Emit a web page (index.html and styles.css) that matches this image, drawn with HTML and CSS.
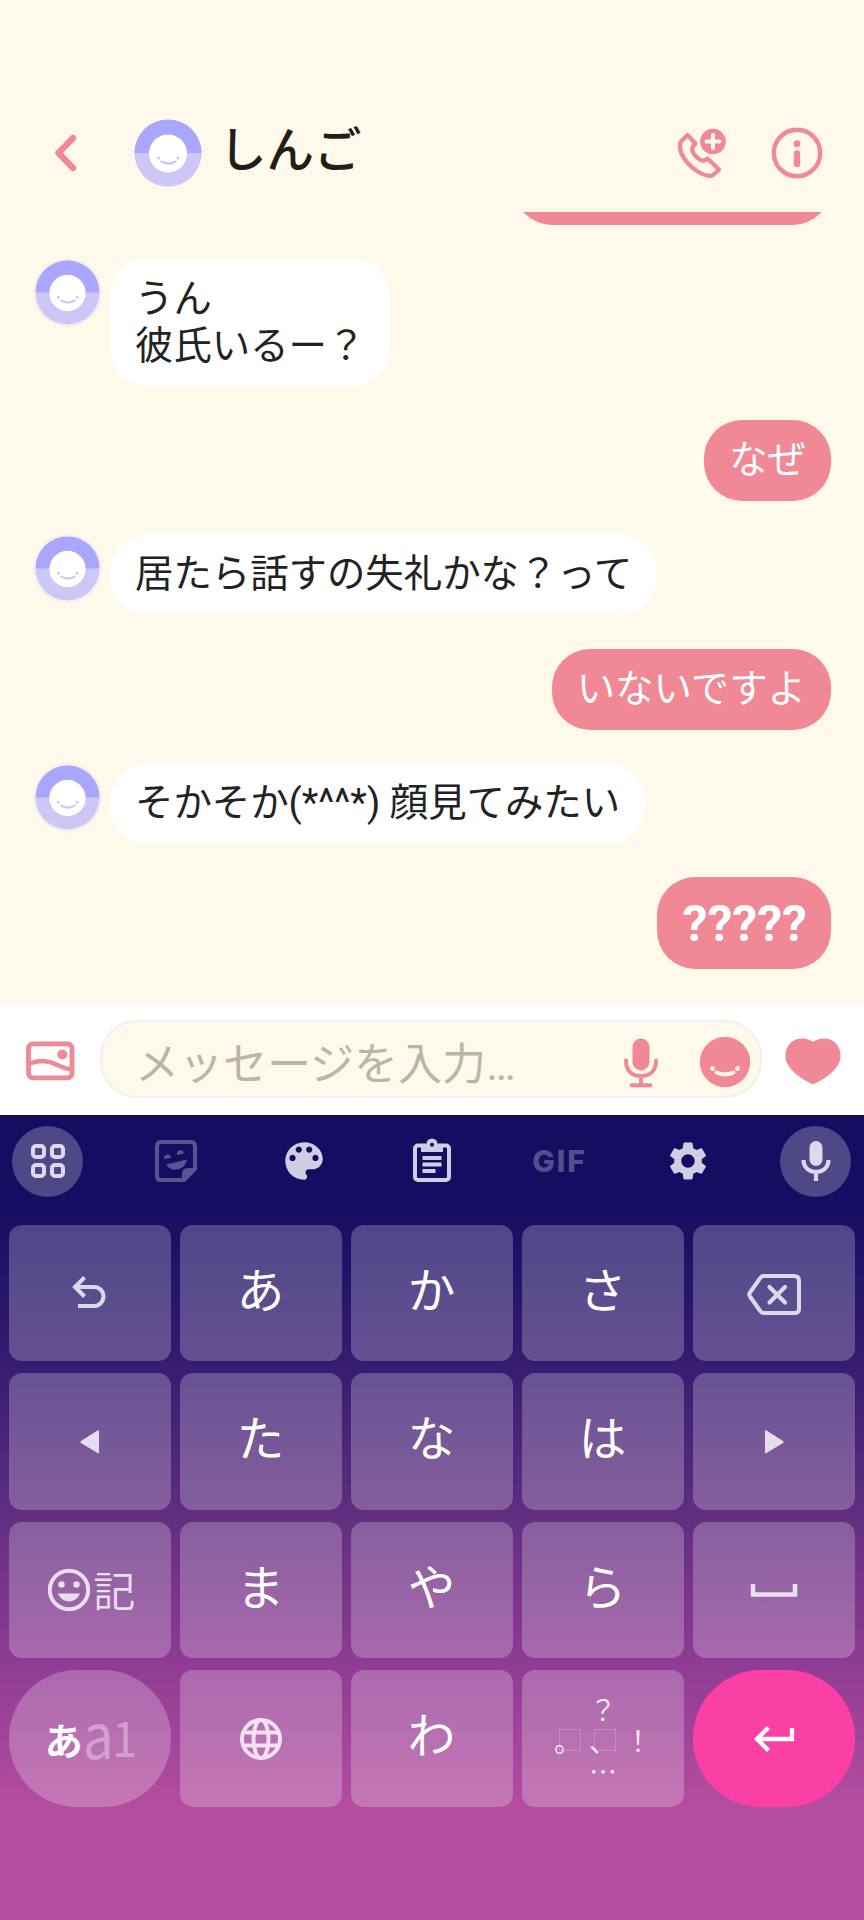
FILE: index.html
```html
<!DOCTYPE html>
<html lang="ja">
<head>
<meta charset="utf-8">
<title>しんご</title>
<link rel="stylesheet" href="styles.css">
</head>
<body>
<svg class="defs" width="0" height="0">
  <symbol id="avatar" viewBox="0 0 68 68">
    <circle cx="34" cy="34" r="33.5" fill="#cdc7f6"/>
    <path d="M.5 34a33.5 33.5 0 0 1 67 0z" fill="#a8a7fd"/>
    <circle cx="34" cy="34.5" r="19" fill="#fff"/>
    <path d="M27.500 42.500Q34.500 46.500 41.500 42.500" fill="none" stroke="#cdc7f6" stroke-width="2.400" stroke-linecap="round"/>
    <circle cx="24.500" cy="39" r="1.500" fill="#cdc7f6"/><circle cx="44" cy="39" r="1.500" fill="#cdc7f6"/>
  </symbol>
</svg>
<div class="screen">
  <header class="header">
    <svg class="back" width="24" height="40" viewBox="0 0 24 40"><path d="M20 5 5.500 20 20 35" fill="none" stroke="#f08896" stroke-width="6.400" stroke-linecap="round" stroke-linejoin="round"/></svg>
    <svg class="photo" width="68" height="68"><use href="#avatar"/></svg>
    <h1 class="name">しんご</h1>
    <svg class="call" width="52" height="52" viewBox="0 0 52 52">
      <path d="M12.500 8 20.500 16.500C15 21 17 25.500 21 29.500C25 33.500 29 35.500 32.500 31.500L44 42.500 37.500 48.500C31 50 21 45 14 37.500C7 30 3.500 22 5.500 15Z" fill="none" stroke="#f08896" stroke-width="4.200" stroke-linejoin="round"/>
      <circle cx="38" cy="14.500" r="14.500" fill="#fff9eb"/><circle cx="38" cy="14.500" r="12.800" fill="#f08896"/>
      <path d="M38 8v13M31.500 14.500h13" stroke="#fff9eb" stroke-width="4" stroke-linecap="round"/>
    </svg>
    <svg class="info" width="52" height="52" viewBox="0 0 52 52">
      <circle cx="26" cy="26" r="23.200" fill="none" stroke="#f08896" stroke-width="4.400"/>
      <circle cx="26" cy="16.700" r="3.400" fill="#f08896"/><path d="M26 26.500v10.500" stroke="#f08896" stroke-width="6.400" stroke-linecap="round"/>
    </svg>
  </header>
  <main class="chat">
    <div class="row sent"><div class="bubble clipped"></div></div>
    <div class="row"><svg class="mini" width="65" height="65"><use href="#avatar"/></svg><p class="bubble tall">うん<br>彼氏いるー？</p></div>
    <div class="row sent"><p class="bubble">なぜ</p></div>
    <div class="row"><svg class="mini" width="65" height="65"><use href="#avatar"/></svg><p class="bubble">居たら話すの失礼かな？って</p></div>
    <div class="row sent"><p class="bubble">いないですよ</p></div>
    <div class="row"><svg class="mini" width="65" height="65"><use href="#avatar"/></svg><p class="bubble">そかそか<span class="latin">(*^^*) </span>顔見てみたい</p></div>
    <div class="row sent"><p class="bubble big">?????</p></div>
  </main>
  <section class="composer">
    <svg class="gallery" width="50" height="42" viewBox="0 0 50 42">
      <rect x="3.500" y="3.800" width="43.500" height="34" rx="4.500" fill="none" stroke="#f08896" stroke-width="4.800"/>
      <path d="M3.500 24C13 20 22 20 31 24.500Q39 28.500 47 29.500" fill="none" stroke="#f08896" stroke-width="4.500"/><circle cx="37.300" cy="14.500" r="5" fill="#f08896"/>
    </svg>
    <div class="field">
      <span class="placeholder">メッセージを入力<span class="dots">…</span></span>
      <svg class="mic" width="36" height="50" viewBox="0 0 36 50">
        <rect x="9.500" y=".500" width="17" height="32" rx="8.500" fill="#f08896"/>
        <path d="M3 22.500C3 34 10 38 18 38S33 34 33 22.500M18 38v9M8.500 47.200h19" fill="none" stroke="#f08896" stroke-width="4" stroke-linecap="round"/>
      </svg>
      <svg class="smile" width="52" height="52" viewBox="0 0 52 52">
        <circle cx="26" cy="26" r="25.200" fill="#f08896"/><circle cx="13.500" cy="32.500" r="2.400" fill="#fff9eb"/><circle cx="38.500" cy="32.500" r="2.400" fill="#fff9eb"/>
        <path d="M17.500 36.500Q26 40.500 34.500 36.500" fill="none" stroke="#fff9eb" stroke-width="4" stroke-linecap="round"/>
      </svg>
    </div>
    <svg class="heart" width="56" height="46" viewBox="0 0 56 46"><path d="M28 4C33 0 42-1 48 3C55 7.500 57.500 17 54 25C50 34 39 41 30 45.500Q28 46.300 26 45.500C17 41 6 34 2 25C-1.500 17 1 7.500 8 3C14-1 23 0 28 4Z" fill="#f08896"/></svg>
  </section>
  <section class="keyboard">
    <div class="tools">
      <div class="tool round"><svg width="36" height="36" viewBox="0 0 36 36" fill="none" stroke="#dcd9ec" stroke-width="4"><rect x="3" y="3" width="11" height="11" rx="3"/><rect x="22" y="3" width="11" height="11" rx="3"/><rect x="3" y="22" width="11" height="11" rx="3"/><rect x="22" y="22" width="11" height="11" rx="3"/></svg></div>
      <div class="tool"><svg width="44" height="44" viewBox="0 0 44 44"><path d="M7 3h30q4 0 4 4v23L30 41H7q-4 0-4-4V7q0-4 4-4Z" fill="none" stroke="#585391" stroke-width="4"/><path d="M28 42V35q0-6 6-6h8ZM10 20a3.500 4 0 0 1 7-1ZM23 16a3.500 4 0 0 1 7-1.500ZM12 25.500 33 20.500C31 32 17 34 12 25.500Z" fill="#585391"/></svg></div>
      <div class="tool"><svg width="50" height="50" viewBox="0 0 24 24" fill="#d0cee4"><path d="M12 3c-4.970 0-9 4.030-9 9s4.030 9 9 9c.830 0 1.500-.670 1.500-1.500 0-.390-.150-.740-.390-1.010-.230-.260-.380-.610-.380-.990 0-.830.670-1.500 1.500-1.500H16c2.760 0 5-2.240 5-5 0-4.420-4.030-8-9-8zm-5.500 9c-.830 0-1.500-.670-1.500-1.500S5.670 9 6.500 9 8 9.670 8 10.500 7.330 12 6.500 12zm3-4C8.670 8 8 7.330 8 6.500S8.670 5 9.500 5s1.500.670 1.500 1.500S10.330 8 9.500 8zm5 0c-.830 0-1.500-.670-1.500-1.500S13.670 5 14.500 5s1.500.670 1.500 1.500S15.330 8 14.500 8zm3 4c-.830 0-1.500-.670-1.500-1.500S16.670 9 17.500 9s1.500.670 1.500 1.500-.670 1.500-1.500 1.500z"/></svg></div>
      <div class="tool"><svg width="40" height="46" viewBox="0 0 40 46"><rect x="3" y="7.500" width="34" height="34.500" rx="3" fill="none" stroke="#d0cee4" stroke-width="4"/><path d="M9 6h5.500a5.500 5.500 0 0 1 11 0H31v8H9Z" fill="#d0cee4"/><circle cx="20" cy="6.800" r="2" fill="#150d62"/><path d="M10.500 20h19M10.500 26.500h19M10.500 33h13" stroke="#d0cee4" stroke-width="4"/></svg></div>
      <div class="tool"><span class="gif">GIF</span></div>
      <div class="tool"><svg width="46" height="46" viewBox="0 0 24 24" fill="#d0cee4"><path d="M19.140 12.940c.040-.300.060-.610.060-.940 0-.320-.020-.640-.070-.940l2.030-1.580c.180-.140.230-.410.120-.610l-1.920-3.320c-.120-.220-.370-.290-.590-.220l-2.390.960c-.500-.380-1.030-.700-1.620-.940l-.360-2.540c-.040-.240-.240-.410-.480-.410h-3.840c-.240 0-.430.170-.470.410l-.360 2.540c-.590.240-1.130.570-1.620.940l-2.390-.960c-.220-.080-.470 0-.590.220L2.740 8.870c-.120.210-.080.470.120.610l2.030 1.580c-.050.300-.090.630-.090.940s.020.640.070.940l-2.030 1.580c-.180.140-.230.410-.120.610l1.920 3.320c.120.220.370.290.590.220l2.390-.960c.500.380 1.030.700 1.620.940l.360 2.540c.050.240.240.410.480.410h3.840c.240 0 .440-.170.470-.410l.360-2.540c.590-.240 1.130-.560 1.620-.940l2.390.960c.220.080.470 0 .590-.220l1.920-3.320c.120-.220.070-.470-.120-.610l-2.010-1.580zM12 15.500c-1.930 0-3.500-1.570-3.500-3.500s1.570-3.500 3.500-3.500 3.500 1.570 3.500 3.500-1.570 3.500-3.500 3.500z"/></svg></div>
      <div class="tool round"><svg width="32" height="42" viewBox="0 0 32 42"><rect x="9.500" y="1" width="13" height="25" rx="6.500" fill="#dcd9ec"/><path d="M3.500 20C3.500 36 28.500 36 28.500 20M16 32v9" fill="none" stroke="#dcd9ec" stroke-width="4.200"/></svg></div>
    </div>
    <div class="keys">
      <div class="key"><svg class="undo" width="36" height="34" viewBox="0 0 36 34"><path d="M13.500 2.500 4 12 13.500 21.500M4.500 12H23a9.500 9.500 0 0 1 0 19H7" fill="none" stroke="#dcd9ec" stroke-width="4"/></svg></div>
      <div class="key"><span>あ</span></div><div class="key"><span>か</span></div><div class="key"><span>さ</span></div>
      <div class="key"><svg class="backspace" width="56" height="44" viewBox="0 0 56 44"><path d="M17.500 3H48q5 0 5 5v28q0 4-5 4H17.500q-2 0-4-3L4 23.500q-1.500-2 0-4L13.500 6q2-3 4-3Z" fill="none" stroke="#dcd9ec" stroke-width="4"/><path d="m23.500 14 15.500 15.500m0-15.500-15.500 15.500" stroke="#dcd9ec" stroke-width="4.200" stroke-linecap="round"/></svg></div>

      <div class="key"><svg width="22" height="26" viewBox="0 0 22 26"><path d="M2 12 18.500 1.500Q20 .800 20 2.500V23Q20 25 18.500 24L2 14Q.500 13 2 12Z" fill="#e5dcec"/></svg></div>
      <div class="key"><span>た</span></div><div class="key"><span>な</span></div><div class="key"><span>は</span></div>
      <div class="key"><svg width="22" height="26" viewBox="0 0 22 26"><path d="M20 12 3.500 1.500Q2 .800 2 2.500V23Q2 25 3.500 24L20 14Q21.500 13 20 12Z" fill="#e5dcec"/></svg></div>

      <div class="key emoji"><svg width="44" height="44" viewBox="0 0 44 44"><circle cx="22" cy="22" r="19.200" fill="none" stroke="#eadff0" stroke-width="4"/><circle cx="14.500" cy="16.500" r="3.200" fill="#eadff0"/><circle cx="29.500" cy="16.500" r="3.200" fill="#eadff0"/><path d="M11 25.500H33C29 36 15 36 11 25.500Z" fill="#eadff0"/></svg><span class="kigou">記</span></div>
      <div class="key"><span>ま</span></div><div class="key"><span>や</span></div><div class="key"><span>ら</span></div>
      <div class="key"><svg class="space" width="50" height="16" viewBox="0 0 50 16"><path d="M4 1v10.500h42V1" fill="none" stroke="#eadff0" stroke-width="4.500"/></svg></div>

      <div class="key pill"><span class="mode-kana">あ</span><span class="mode-a">a</span><span class="mode-1">1</span></div>
      <div class="key"><svg width="44" height="44" viewBox="0 0 44 44" fill="none" stroke="#f3e0f2" stroke-width="4"><circle cx="22" cy="22" r="19"/><ellipse cx="22" cy="22" rx="7.500" ry="19"/><path d="M4 15.500h36M4 28.500h36"/></svg></div>
      <div class="key"><span>わ</span></div>
      <div class="key punct"><i class="p-top">？</i><i class="p-left boxed">。</i><i class="p-mid boxed">、</i><i class="p-right">！</i><i class="p-bottom">…</i></div>
      <div class="key pill enter"><svg width="42" height="28" viewBox="0 0 42 28"><path d="M15.500 2.500 4 14 15.500 25.500M4 14H39V3" fill="none" stroke="#fff" stroke-width="4.300"/></svg></div>
    </div>
  </section>
</div>
</body>
</html>
```
FILE: styles.css
```css
* { box-sizing: border-box; margin: 0; padding: 0; }
body { width: 864px; height: 1920px; overflow: hidden; font-family: "Noto Sans CJK JP", sans-serif; }
svg { display: block; flex: none; }
.defs { position: absolute; }
.screen { width: 864px; height: 1920px; display: flex; flex-direction: column; background: #fff9eb; }

.header { height: 212px; flex: none; padding: 94px 41px 0 53px; display: flex; align-items: center; }
.photo { margin-left: 57px; }
.name { margin: -12px 0 0 17px; font-size: 47.500px; line-height: 60px; font-weight: 500; color: #221e18; }
.call { margin-left: auto; }
.info { margin-left: 44px; }

.chat { height: 791.500px; flex: none; padding: 0 33px 0 35px; display: flex; flex-direction: column; gap: 33.400px; overflow: hidden; }
.row { display: flex; align-items: flex-start; }
.sent { justify-content: flex-end; }
.mini { margin: 2px 10px 0 0; border-radius: 50%; box-shadow: 0 0 2px 1px #e8e6f4; }
.bubble { height: 81px; padding: 13px 25px 20px; border-radius: 38px; background: #fff; color: #222; font-size: 38.400px; line-height: 47px; font-weight: 400; white-space: nowrap; }
.tall { height: 128px; padding-top: 14px; }
.sent .bubble { background: #f08896; color: #fff; }
.sent .clipped { width: 317px; margin-top: -68px; }
.latin { font-family: Roboto, sans-serif; white-space: pre; }
.big { height: 92px; padding: 17px 24px 15px 26px; font-family: Roboto, sans-serif; font-size: 50px; font-weight: 700; line-height: 60px; }

.composer { height: 111.500px; flex: none; background: #fff; display: flex; align-items: center; padding: 0 23px 0 25px; }
.gallery { margin-top: 4px; }
.field { width: 662px; height: 78px; margin: 0 23px 0 25px; padding: 0 9px 0 33px; display: flex; align-items: center; background: #fff9eb; border: 2px solid #f0f0f0; border-radius: 37px; }
.placeholder { margin-top: 8px; font-size: 44px; line-height: 60px; font-weight: 400; color: #b9b6a8; }
.dots { font-family: Roboto, sans-serif; }
.mic { margin: 7px 0 0 auto; }
.smile { margin: 5px 0 0 40px; }
.heart { margin-top: 3px; }

.keyboard { flex: 1; background: linear-gradient(#150d62 0, #150d62 90px, #371c71 250px, #612e80 400px, #8f3c94 550px, #b64e9f 700px); }
.tools { height: 110px; padding: 10.500px 13px 0 12px; display: flex; justify-content: space-between; }
.tool { width: 71px; height: 71px; display: flex; align-items: center; justify-content: center; }
.round { border-radius: 50%; background: #4e4887; }
.gif { font-family: Inter, sans-serif; font-size: 30px; font-weight: 800; line-height: 30px; letter-spacing: 2px; color: #534e8e; }

.keys { padding: 0 9px; display: grid; grid-template-columns: repeat(5, 1fr); grid-auto-rows: 136.300px; gap: 12.200px 9.500px; }
.key { display: flex; align-items: center; justify-content: center; border-radius: 13px; background: rgba(255, 255, 255, .235); color: #fff; font-size: 47.500px; line-height: 60px; }
.key > span { margin: -11px 1px 0 0; }
.undo { margin: -2px 1px 0 0; }
.backspace { margin-top: 4px; }
.space { margin-top: 2px; }
.key .kigou { margin: 0 0 3px 2px; font-size: 42px; font-weight: 350; color: #eadff0; }
.emoji { padding-left: 3px; }
.pill { border-radius: 68px; }
.enter { background: #fb40a5; }
.key .mode-kana { width: 38px; margin: 0; font-size: 38px; font-weight: 700; }
.key .mode-a { width: 29px; margin: -13px 0 0; font-size: 62px; font-weight: 400; color: #d4a0cf; transform: scaleX(.880); transform-origin: left; }
.key .mode-1 { width: 23px; margin: -6px 0 0; font-size: 48px; font-weight: 400; color: #d4a0cf; transform: scaleX(.950); transform-origin: left; }
.punct { padding-top: 3px; display: grid; grid-template-columns: repeat(3, 35px); grid-auto-rows: 31px; align-content: center; justify-items: center; font-size: 28px; line-height: 31px; font-weight: 350; color: #f8e8f6; }
.punct i { width: 28px; font-style: normal; }
.p-top, .p-bottom { grid-column: 2; }
.p-left { grid-column: 1; }
.boxed { position: relative; }
.boxed::after { content: ""; position: absolute; left: 5px; top: 4px; width: 20px; height: 20px; border: 1px solid rgba(255, 255, 255, .2); }
```
